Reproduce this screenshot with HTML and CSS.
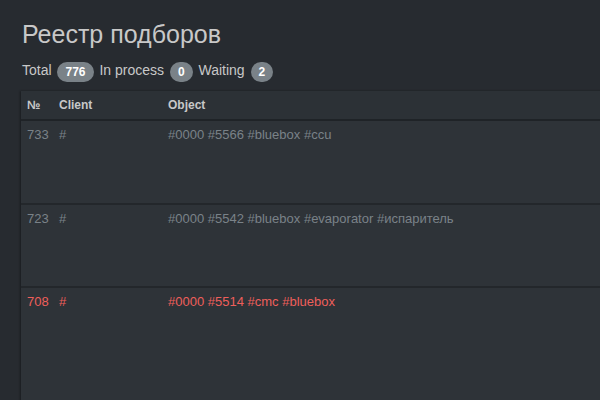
FILE: index.html
```html
<!DOCTYPE html>
<html>
<head>
<meta charset="utf-8">
<link rel="stylesheet" href="styles.css">
</head>
<body>
<div class="page">
  <h1 class="title">Реестр подборов</h1>
  <div class="stats">Total <span class="badge">776</span> In process <span class="badge">0</span> Waiting <span class="badge">2</span></div>
  <table class="grid">
    <colgroup><col class="c-num"><col class="c-client"><col></colgroup>
    <thead>
      <tr><th>№</th><th>Client</th><th>Object</th></tr>
    </thead>
    <tbody>
      <tr class="row first"><td>733</td><td>#</td><td>#0000 #5566 #bluebox #ccu</td></tr>
      <tr class="row"><td>723</td><td>#</td><td>#0000 #5542 #bluebox #evaporator #испаритель</td></tr>
      <tr class="row danger last"><td>708</td><td>#</td><td>#0000 #5514 #cmc #bluebox</td></tr>
    </tbody>
  </table>
</div>
</body>
</html>
```
FILE: styles.css
```css
html, body {
  margin: 0;
  padding: 0;
  background: #272b30;
  overflow: hidden;
  height: 400px;
}
body {
  font-family: "Liberation Sans", Arial, sans-serif;
  color: #c8c8c8;
}
.page {
  padding-left: 21px;
  width: 640px;
}
.title {
  margin: 0;
  padding-top: 19px;
  font-size: 25px;
  font-weight: 400;
  line-height: 31px;
  color: #c8c8c8;
  padding-left: 1px;
}
.stats {
  margin-top: 10px;
  font-size: 14px;
  line-height: 20px;
  padding-left: 1px;
}
.badge {
  display: inline-block;
  background: #7a8288;
  color: #fff;
  font-weight: 700;
  font-size: 12px;
  line-height: 12px;
  padding: 4px 8px 4px;
  margin: 0 2px;
  border-radius: 10px;
  vertical-align: -1px;
}
.grid {
  margin-top: 9px;
  width: 620px;
  table-layout: fixed;
  border-collapse: collapse;
  background: #2e3338;
  font-size: 13px;
  box-shadow: -1px 0 2px rgba(0,0,0,0.35);
}
.c-num { width: 32px; }
.c-client { width: 109px; }
.grid th {
  text-align: left;
  font-weight: 700;
  font-size: 12px;
  color: #c8c8c8;
  height: 28px;
  padding: 0 6px;
  border-bottom: 2px solid #1f2327;
  background: #2c3136;
}
.grid td {
  vertical-align: top;
  color: #7a8288;
  padding: 6px 6px 0;
  height: 75px;
  border-top: 2px solid #23272b;
  white-space: nowrap;
}
.grid .first td { border-top: 0; height: 76px; }
.grid .last td { height: 120px; }
.danger td { color: #ee5f5b; }
```
